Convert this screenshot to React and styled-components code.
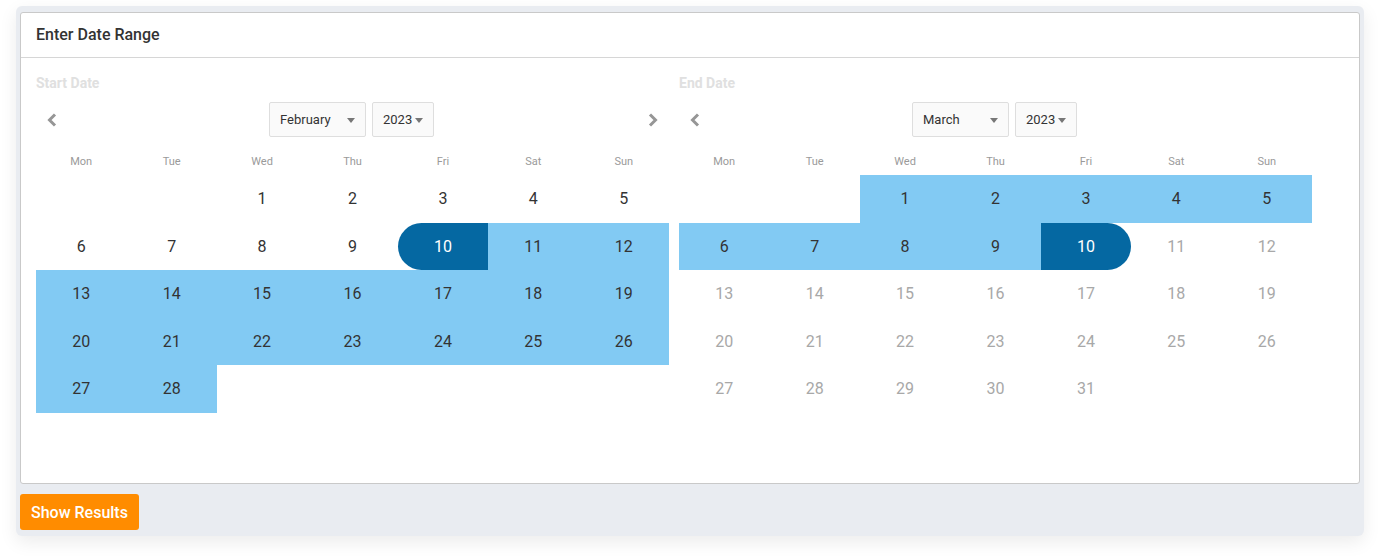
import React from 'react';
import styled, { createGlobalStyle, css } from 'styled-components';

const Global = createGlobalStyle`
  body {
    margin: 0;
    background: #fff;
    font-family: Roboto, "Liberation Sans", Arial, sans-serif;
  }
`;

const Page = styled.div`
  padding: 6px 18px 24px 16px;
`;

const Panel = styled.div`
  width: 1348px;
  box-sizing: border-box;
  padding: 6px 4px;
  background: #e9ecf1;
  border-radius: 6px;
  box-shadow: 0 6px 18px rgba(0, 0, 0, 0.08);
`;

const Card = styled.div`
  background: #fff;
  border: 1px solid #c9c9c9;
  border-radius: 3px;
  height: 472px;
  box-sizing: border-box;
`;

const CardHeader = styled.div`
  height: 45px;
  box-sizing: border-box;
  border-bottom: 1px solid #d6d6d6;
  padding: 0 15px 2px;
  display: flex;
  align-items: center;
  font-size: 16px;
  font-weight: 500;
  color: #333;
`;

const CardBody = styled.div`
  display: flex;
  gap: 10px;
  padding: 17px 15px 0;
`;

const Calendar = styled.div`
  width: 633px;
`;

const Label = styled.div`
  font-size: 14px;
  font-weight: 700;
  line-height: 16px;
  color: #e0e0e0;
`;

const NavRow = styled.div`
  margin-top: 11px;
  height: 35px;
  display: grid;
  grid-template-columns: 1fr auto 1fr;
  align-items: center;
`;

const ArrowSlot = styled.div`
  display: flex;
  justify-content: ${(p) => (p.$side === 'right' ? 'flex-end' : 'flex-start')};
  padding: 0 10px;
`;

const Selects = styled.div`
  display: flex;
  gap: 6px;
  margin-left: -2px;
`;

const SelectBox = styled.div`
  width: ${(p) => p.$w}px;
  height: 35px;
  box-sizing: border-box;
  border: 1px solid #dedede;
  border-radius: 2px;
  background: #fafafa;
  padding: 0 10px 0 10px;
  display: flex;
  align-items: center;
  justify-content: space-between;
  font-size: 13px;
  color: #333;
`;

const Caret = styled.span`
  width: 0;
  height: 0;
  border-left: 4px solid transparent;
  border-right: 4px solid transparent;
  border-top: 5px solid #777;
  margin-top: 1px;
`;

const DayNames = styled.div`
  display: grid;
  grid-template-columns: repeat(7, 1fr);
  height: 38px;
  box-sizing: border-box;
  padding-top: 17px;
  font-size: 11px;
  line-height: 16px;
  color: #9a9a9a;
  text-align: center;
`;

const DaysGrid = styled.div`
  display: grid;
  grid-template-columns: repeat(7, 1fr);
  grid-auto-rows: 47.5px;
`;

const tones = {
  empty: css``,
  normal: css`color: #333;`,
  muted: css`color: #a8a8a8;`,
  range: css`
    color: #333;
    background: #82caf3;
  `,
  start: css`
    color: #fff;
    background: #0568a2;
    border-radius: 24px 0 0 24px;
  `,
  end: css`
    color: #fff;
    background: #0568a2;
    border-radius: 0 24px 24px 0;
  `,
};

const Day = styled.div`
  display: flex;
  align-items: center;
  justify-content: center;
  font-size: 16px;
  ${(p) => tones[p.$tone]}
`;

const Footer = styled.div`
  padding-top: 10px;
`;

const Button = styled.button`
  height: 36px;
  padding: 0 11px;
  border: none;
  border-radius: 3px;
  background: #ff8c00;
  color: #fff;
  font-family: Roboto, "Liberation Sans", Arial, sans-serif;
  font-size: 16px;
  font-weight: 500;
  cursor: pointer;
`;

const Chevron = ({ dir }) => (
  <svg width="12" height="14" viewBox="0 0 12 14">
    <polyline
      points={dir === 'left' ? '9,1.5 3.5,7 9,12.5' : '3,1.5 8.5,7 3,12.5'}
      fill="none"
      stroke="#969696"
      strokeWidth="3"
      strokeLinejoin="miter"
    />
  </svg>
);

const NAMES = ['Mon', 'Tue', 'Wed', 'Thu', 'Fri', 'Sat', 'Sun'];

function MonthCal({ label, month, monthW, offset, days, toneOf, prev, next }) {
  const cells = [];
  for (let i = 0; i < offset; i++) cells.push(<Day key={'e' + i} $tone="empty" />);
  for (let d = 1; d <= days; d++)
    cells.push(
      <Day key={d} $tone={toneOf(d)}>
        {d}
      </Day>
    );
  return (
    <Calendar>
      <Label>{label}</Label>
      <NavRow>
        <ArrowSlot $side="left">{prev && <Chevron dir="left" />}</ArrowSlot>
        <Selects>
          <SelectBox $w={monthW}>
            <span>{month}</span>
            <Caret />
          </SelectBox>
          <SelectBox $w={62}>
            <span>2023</span>
            <Caret />
          </SelectBox>
        </Selects>
        <ArrowSlot $side="right">{next && <Chevron dir="right" />}</ArrowSlot>
      </NavRow>
      <DayNames>
        {NAMES.map((n) => (
          <div key={n}>{n}</div>
        ))}
      </DayNames>
      <DaysGrid>{cells}</DaysGrid>
    </Calendar>
  );
}

export default function App() {
  return (
    <>
      <Global />
      <Page>
        <Panel>
          <Card>
            <CardHeader>Enter Date Range</CardHeader>
            <CardBody>
              <MonthCal
                label="Start Date"
                month="February"
                monthW={97}
                offset={2}
                days={28}
                prev
                next
                toneOf={(d) => (d < 10 ? 'normal' : d === 10 ? 'start' : 'range')}
              />
              <MonthCal
                label="End Date"
                month="March"
                monthW={97}
                offset={2}
                days={31}
                prev
                toneOf={(d) => (d < 10 ? 'range' : d === 10 ? 'end' : 'muted')}
              />
            </CardBody>
          </Card>
          <Footer>
            <Button>Show Results</Button>
          </Footer>
        </Panel>
      </Page>
    </>
  );
}
